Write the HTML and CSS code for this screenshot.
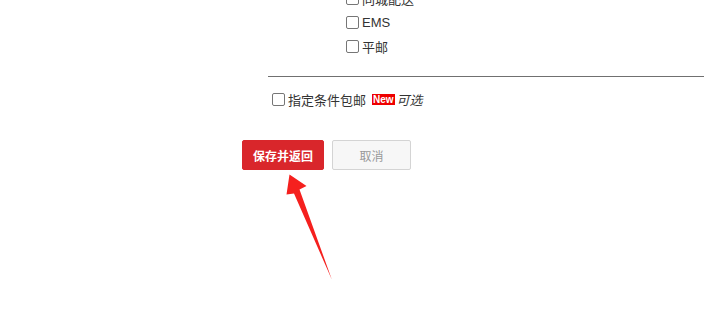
FILE: index.html
```html
<!DOCTYPE html>
<html>
<head>
<meta charset="utf-8">
<link rel="stylesheet" href="styles.css">
</head>
<body>
<div class="page">
  <ul class="options">
    <li class="opt"><span class="box"></span><span>同城配送</span></li>
    <li class="opt"><span class="box"></span><span>EMS</span></li>
    <li class="opt"><span class="box"></span><span>平邮</span></li>
  </ul>
  <div class="divider"></div>
  <div class="cond">
    <span class="box"></span><span>指定条件包邮</span><span class="badge">New</span><span class="opt-label">可选</span>
  </div>
  <div class="actions">
    <button class="btn btn-primary">保存并返回</button>
    <button class="btn btn-default">取消</button>
  </div>
  <svg class="arrow" width="704" height="309" viewBox="0 0 704 309">
    <polygon points="289.5,174.5 306.5,186 299.5,189.5 332,280 294,193.5 286.5,194.5" fill="#f5201e"/>
  </svg>
</div>
</body>
</html>
```
FILE: styles.css
```css
html, body {
  margin: 0;
  padding: 0;
  background: #fff;
}
body {
  font-family: "Liberation Sans", "Noto Sans CJK SC", sans-serif;
  font-size: 13px;
  color: #333;
}
.page {
  position: relative;
  width: 704px;
  height: 309px;
  overflow: hidden;
}
.options {
  list-style: none;
  margin: -10px 0 0 0;
  padding: 0 0 0 346px;
  display: flex;
  flex-direction: column;
  gap: 7px;
}
.opt {
  display: flex;
  align-items: center;
  height: 17px;
}
.box {
  display: inline-block;
  box-sizing: border-box;
  width: 13px;
  height: 13px;
  border: 1px solid #767676;
  border-radius: 2px;
  margin-right: 3px;
  background: #fff;
}
.divider {
  margin: 21px 0 0 268px;
  border-top: 1px solid #707070;
}
.cond {
  display: flex;
  align-items: center;
  margin: 14px 0 0 272px;
  height: 17px;
}
.badge {
  background: #e00;
  color: #fff;
  font-family: "Liberation Sans", sans-serif;
  font-size: 10px;
  font-weight: bold;
  line-height: 11px;
  padding: 0 1px;
  margin-left: 6px;
  margin-right: 2px;
}
.opt-label {
  font-style: italic;
}
.actions {
  display: flex;
  gap: 8px;
  margin: 32px 0 0 242px;
}
.btn {
  height: 30px;
  box-sizing: border-box;
  font-family: "Noto Sans CJK SC", sans-serif;
  font-size: 12px;
  border-radius: 2px;
  padding: 0;
  cursor: pointer;
}
.btn-primary {
  width: 82px;
  background: #d9262b;
  border: 1px solid #d9262b;
  color: #fff;
  font-weight: bold;
}
.btn-default {
  width: 79px;
  background: #f7f7f7;
  border: 1px solid #d4d4d4;
  color: #999;
}
.arrow {
  position: absolute;
  left: 0;
  top: 0;
}
```
